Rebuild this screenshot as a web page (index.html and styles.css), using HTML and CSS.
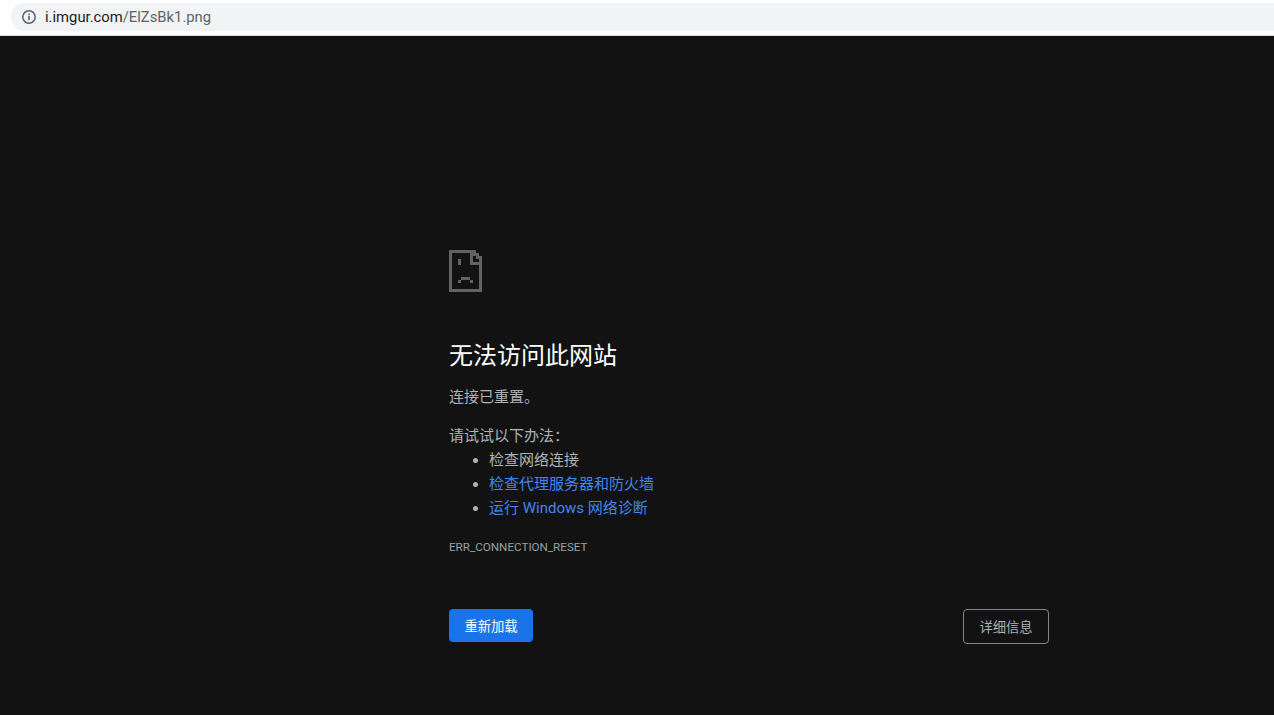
FILE: index.html
```html
<!DOCTYPE html>
<html lang="zh-CN">
<head>
<meta charset="utf-8">
<title>i.imgur.com</title>
<link rel="stylesheet" href="styles.css">
</head>
<body>
<header class="toolbar">
  <div class="omnibox">
    <svg class="info-icon" width="16" height="16" viewBox="0 0 16 16" aria-hidden="true">
      <circle cx="8" cy="8" r="6.2" fill="none" stroke="#5f6368" stroke-width="1.5"/>
      <rect x="7.2" y="7" width="1.6" height="4.2" fill="#5f6368"/>
      <rect x="7.2" y="4.6" width="1.6" height="1.6" fill="#5f6368"/>
    </svg>
    <span class="url"><span class="host">i.imgur.com</span>/ElZsBk1.png</span>
  </div>
</header>
<main class="page">
  <div class="dialog">
    <svg class="sad-icon" width="33" height="42" viewBox="0 0 33 42" aria-hidden="true">
      <path fill="#5f6368" d="M0 0H27V3H30V6H33V42H0V0ZM3 3V39H30V15H21V3H3ZM24 3V12H30V9H27V6H24V3Z"/>
      <rect x="9" y="9" width="3" height="6" fill="#5f6368"/>
      <rect x="9" y="30" width="3" height="3" fill="#5f6368"/>
      <rect x="12" y="27" width="9" height="3" fill="#5f6368"/>
      <rect x="21" y="30" width="3" height="3" fill="#5f6368"/>
    </svg>
    <h1 class="title">无法访问此网站</h1>
    <p class="summary">连接已重置。</p>
    <p class="try">请试试以下办法：</p>
    <ul class="suggestions">
      <li>检查网络连接</li>
      <li><a href="#">检查代理服务器和防火墙</a></li>
      <li><a href="#">运行 Windows 网络诊断</a></li>
    </ul>
    <div class="code">ERR_CONNECTION_RESET</div>
    <div class="buttons">
      <button class="btn primary">重新加载</button>
      <button class="btn secondary">详细信息</button>
    </div>
  </div>
</main>
</body>
</html>
```
FILE: styles.css
```css
* { box-sizing: border-box; }
html, body { margin: 0; height: 100%; }
body {
  display: flex;
  flex-direction: column;
  height: 715px;
  overflow: hidden;
  background: #121212;
  font-family: "Roboto", "Noto Sans CJK SC", sans-serif;
}
.toolbar {
  height: 36px;
  flex: none;
  background: #fff;
  padding: 3px 0 5px 11px;
  border-bottom: 1px solid #dfe1e5;
}
.omnibox {
  height: 28px;
  display: flex;
  align-items: center;
  padding-left: 10px;
  background: #f1f3f4;
  border-radius: 14px 0 0 14px;
}
.info-icon { flex: none; }
.url {
  margin-left: 8px;
  font-size: 14.8px;
  color: #5f6368;
}
.host { color: #202124; }
.page {
  flex: 1;
  display: flex;
  padding: 214px 0 0 449px;
}
.dialog { width: 600px; }
.sad-icon { display: block; }
.title {
  margin: 49px 0 0;
  font-size: 24px;
  line-height: 30px;
  font-weight: 400;
  color: #fff;
}
.summary, .try, .suggestions {
  font-size: 15px;
  line-height: 24px;
  color: #aeb2b7;
}
.summary { margin: 14px 0 0; }
.try { margin: 15px 0 0; }
.suggestions { margin: 0; padding-left: 40px; }
.suggestions a { color: #4285f4; text-decoration: none; }
.code {
  margin-top: 18px;
  font-size: 11.65px;
  line-height: 18px;
  color: #9aa0a6;
}
.buttons {
  display: flex;
  justify-content: space-between;
  align-items: flex-start;
  margin-top: 53px;
}
.btn {
  height: 33px;
  padding: 0;
  border-radius: 4px;
  font-family: inherit;
  font-size: 13.3px;
  white-space: nowrap;
}
.primary { width: 84px; background: #1a73e8; border: 0; color: #fff; }
.secondary {
  width: 86px;
  height: 35px;
  background: transparent;
  border: 1px solid #80868b;
  color: #aeb2b7;
}
```
